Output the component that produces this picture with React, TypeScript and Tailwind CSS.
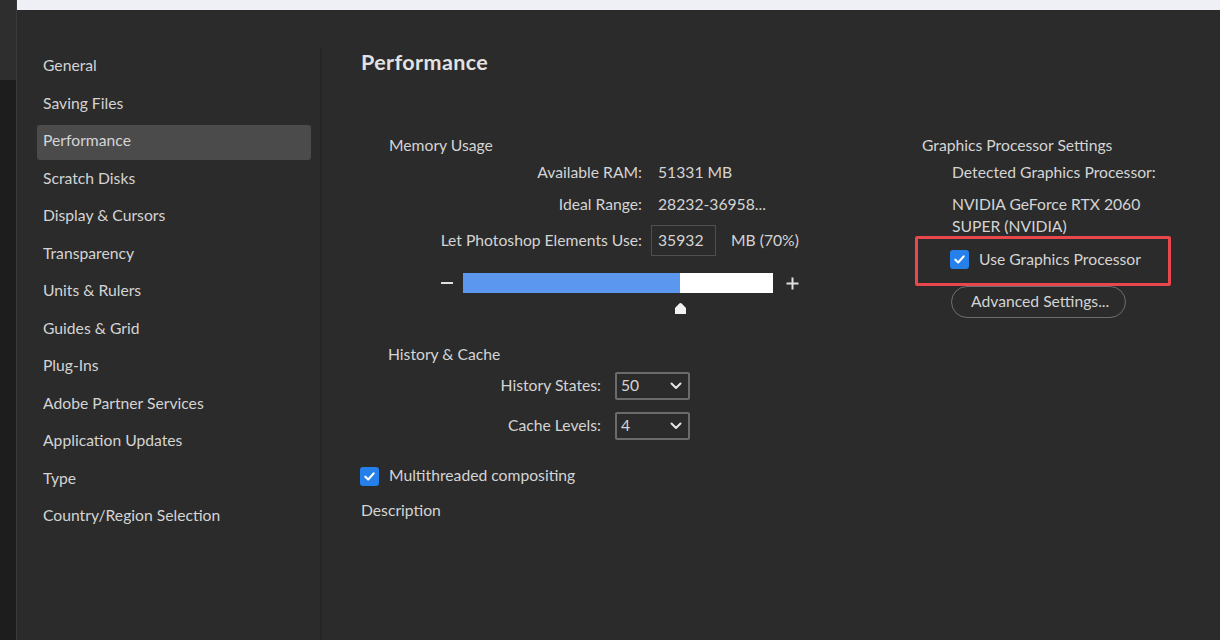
import React from "react";

const navItems = [
  "General",
  "Saving Files",
  "Performance",
  "Scratch Disks",
  "Display & Cursors",
  "Transparency",
  "Units & Rulers",
  "Guides & Grid",
  "Plug-Ins",
  "Adobe Partner Services",
  "Application Updates",
  "Type",
  "Country/Region Selection",
];

function Check() {
  return (
    <div className="w-[19px] h-[19px] rounded-[3px] bg-[#2680eb] flex items-center justify-center shrink-0">
      <svg width="13" height="13" viewBox="0 0 14 14" fill="none">
        <path d="M2.5 7.2 L5.6 10.2 L11.5 3.6" stroke="white" strokeWidth="2.3" strokeLinecap="round" strokeLinejoin="round" />
      </svg>
    </div>
  );
}

function Select({ value }: { value: string }) {
  return (
    <div className="ml-[14px] w-[75px] h-[28px] border-2 border-[#6b6b6b] rounded-[2px] flex items-center justify-between pl-[4px] pr-[6px]">
      <span>{value}</span>
      <svg width="12" height="8" viewBox="0 0 12 8" fill="none">
        <path d="M1.5 1.5 L6 6 L10.5 1.5" stroke="#e6e6e6" strokeWidth="2" strokeLinecap="round" strokeLinejoin="round" />
      </svg>
    </div>
  );
}

export default function App() {
  return (
    <div
      className="w-[1220px] h-[640px] flex bg-[#1e1e1e] text-[15.7px] text-[#d4d4d4] overflow-hidden"
      style={{ fontFamily: "Lato, 'Noto Sans', sans-serif" }}
    >
      {/* left dark strip */}
      <div className="w-[17px] flex flex-col border-r border-[#3a3a3a]">
        <div className="h-[80px] bg-[#2e2e2e]" />
        <div className="flex-1 bg-[#1d1d1d]" />
      </div>

      <div className="flex-1 flex flex-col">
        {/* top light strip */}
        <div className="h-[10px] bg-[#eef0f5]" />

        <div className="flex-1 flex bg-[#2b2b2b]">
          {/* Sidebar */}
          <div className="w-[305px] pl-[20px] pt-[38px]">
            <div className="h-full border-r-2 border-[#262626] pt-[2px] pr-[9px]">
              {navItems.map((item) => (
                <div
                  key={item}
                  className={`h-[35px] mb-[2.5px] pl-[6px] pb-[3px] flex items-center rounded-[3px] ${
                    item === "Performance" ? "bg-[#4b4b4b]" : ""
                  }`}
                >
                  {item}
                </div>
              ))}
            </div>
          </div>

          {/* Content */}
          <div className="flex-1 pl-[39px] pt-[38px]">
            <div className="h-[28px] flex items-center text-[21.5px] font-bold tracking-[0.4px] text-[#e2e2e2]">
              Performance
            </div>

            <div className="flex">
              {/* Left column */}
              <div className="w-[554px]">
                <div className="mt-[59px] h-[22px] flex items-center pl-[28px]">Memory Usage</div>
                <div className="mt-[5px] h-[22px] flex items-center">
                  <div className="w-[281px] text-right">Available RAM:</div>
                  <div className="ml-[16px]">51331 MB</div>
                </div>
                <div className="mt-[10px] h-[22px] flex items-center">
                  <div className="w-[281px] text-right">Ideal Range:</div>
                  <div className="ml-[16px]">28232-36958...</div>
                </div>
                <div className="mt-[9px] h-[31px] flex items-center">
                  <div className="w-[281px] text-right">Let Photoshop Elements Use:</div>
                  <div className="ml-[9px] w-[65px] h-[31px] border border-[#4f4f4f] pl-[6px] flex items-center">
                    35932
                  </div>
                  <div className="ml-[15px]">MB (70%)</div>
                </div>
                {/* slider */}
                <div className="mt-[17px] h-[20px] flex items-center">
                  <div className="ml-[76px] w-[20px] flex justify-center">
                    <div className="w-[12px] h-[2px] bg-[#e0e0e0]" />
                  </div>
                  <div className="ml-[6px] w-[310px] h-[20px] bg-white flex">
                    <div className="w-[217px] h-full bg-[#5b97ee]" />
                  </div>
                  <div className="ml-[9px] w-[20px] flex justify-center">
                    <svg width="13" height="13" viewBox="0 0 13 13">
                      <path d="M6.5 0.5 V12.5 M0.5 6.5 H12.5" stroke="#e0e0e0" strokeWidth="2" />
                    </svg>
                  </div>
                </div>
                <div className="mt-[9px] h-[13px] flex">
                  <div className="ml-[313px]">
                    <svg width="13" height="13" viewBox="0 0 13 13">
                      <path d="M1 6 L5.3 1.6 Q6.5 0.5 7.7 1.6 L12 6 V12 H1 Z" fill="#f2f2f2" />
                    </svg>
                  </div>
                </div>

                <div className="mt-[29px] h-[22px] flex items-center pl-[27px]">History &amp; Cache</div>
                <div className="mt-[6px] h-[28px] flex items-center">
                  <div className="w-[240px] text-right">History States:</div>
                  <Select value="50" />
                </div>
                <div className="mt-[12px] h-[28px] flex items-center">
                  <div className="w-[240px] text-right">Cache Levels:</div>
                  <Select value="4" />
                </div>

                <div className="mt-[25px] h-[22px] flex items-center -ml-[1px]">
                  <Check />
                  <span className="ml-[10px]">Multithreaded compositing</span>
                </div>
                <div className="mt-[13px] h-[22px] flex items-center">Description</div>
              </div>

              {/* Right column */}
              <div className="w-[260px]">
                <div className="mt-[59px] h-[22px] flex items-center pl-[7px]">Graphics Processor Settings</div>
                <div className="mt-[5px] h-[22px] flex items-center pl-[37px]">Detected Graphics Processor:</div>
                <div className="mt-[9px] pl-[37px] leading-[22px]">
                  NVIDIA GeForce RTX 2060
                  <br />
                  SUPER (NVIDIA)
                </div>
                <div className="-mt-[1px] w-[256px] h-[50px] border-[3px] border-[#e8474c] rounded-[2px] flex items-center pl-[32px] pb-[3px]">
                  <Check />
                  <span className="ml-[10px]">Use Graphics Processor</span>
                </div>
                <div className="ml-[36px] w-[175px] h-[32px] rounded-full border border-[#6e6e6e] flex items-center pl-[19px]">
                  Advanced Settings...
                </div>
              </div>
            </div>
          </div>
        </div>
      </div>
    </div>
  );
}
